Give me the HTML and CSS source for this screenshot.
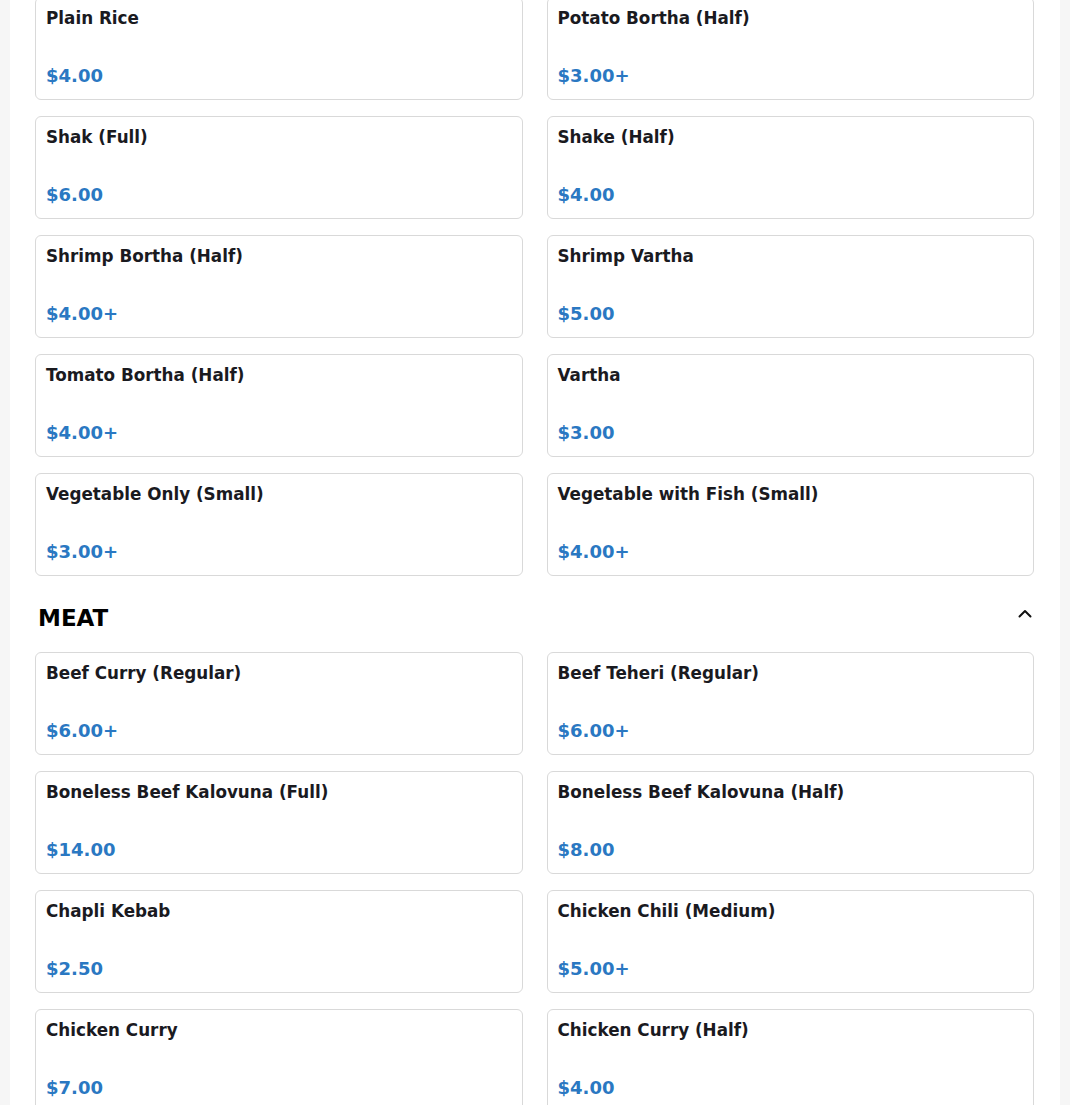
FILE: index.html
```html
<!DOCTYPE html>
<html lang="en">
<head>
<meta charset="utf-8">
<title>Menu</title>
<link rel="stylesheet" href="styles.css">
</head>
<body>
<main class="menu">
  <section class="category">
    <div class="items">
      <div class="item"><div class="item-name">Plain Rice</div><div class="item-price">$4.00</div></div>
      <div class="item"><div class="item-name">Potato Bortha (Half)</div><div class="item-price">$3.00+</div></div>
      <div class="item"><div class="item-name">Shak (Full)</div><div class="item-price">$6.00</div></div>
      <div class="item"><div class="item-name">Shake (Half)</div><div class="item-price">$4.00</div></div>
      <div class="item"><div class="item-name">Shrimp Bortha (Half)</div><div class="item-price">$4.00+</div></div>
      <div class="item"><div class="item-name">Shrimp Vartha</div><div class="item-price">$5.00</div></div>
      <div class="item"><div class="item-name">Tomato Bortha (Half)</div><div class="item-price">$4.00+</div></div>
      <div class="item"><div class="item-name">Vartha</div><div class="item-price">$3.00</div></div>
      <div class="item"><div class="item-name">Vegetable Only (Small)</div><div class="item-price">$3.00+</div></div>
      <div class="item"><div class="item-name">Vegetable with Fish (Small)</div><div class="item-price">$4.00+</div></div>
    </div>
  </section>
  <section class="category">
    <div class="category-header">
      <h2 class="category-title">MEAT</h2>
      <svg class="chevron" width="20" height="20" viewBox="0 0 20 20" aria-hidden="true"><path d="M5.5 8.5 L11 3 L16.5 8.5" fill="none" stroke="#111" stroke-width="2" stroke-linecap="round" stroke-linejoin="round"/></svg>
    </div>
    <div class="items">
      <div class="item"><div class="item-name">Beef Curry (Regular)</div><div class="item-price">$6.00+</div></div>
      <div class="item"><div class="item-name">Beef Teheri (Regular)</div><div class="item-price">$6.00+</div></div>
      <div class="item"><div class="item-name">Boneless Beef Kalovuna (Full)</div><div class="item-price">$14.00</div></div>
      <div class="item"><div class="item-name">Boneless Beef Kalovuna (Half)</div><div class="item-price">$8.00</div></div>
      <div class="item"><div class="item-name">Chapli Kebab</div><div class="item-price">$2.50</div></div>
      <div class="item"><div class="item-name">Chicken Chili (Medium)</div><div class="item-price">$5.00+</div></div>
      <div class="item"><div class="item-name">Chicken Curry</div><div class="item-price">$7.00</div></div>
      <div class="item"><div class="item-name">Chicken Curry (Half)</div><div class="item-price">$4.00</div></div>
    </div>
  </section>
</main>
</body>
</html>
```
FILE: styles.css
```css
html, body {
  margin: 0;
  padding: 0;
}
body {
  background: #f6f6f6;
  font-family: "DejaVu Sans", "Liberation Sans", sans-serif;
  overflow: hidden;
}
.menu {
  background: #ffffff;
  margin: -3px 10px 0 10px;
  padding: 0 26px 40px 25px;
}
.items {
  display: grid;
  grid-template-columns: 1fr 1fr;
  column-gap: 24px;
  row-gap: 16px;
}
.item {
  box-sizing: border-box;
  height: 103px;
  border: 1px solid #d9d9d9;
  border-radius: 6px;
  padding: 10px 10px 13px 10px;
  background: #fff;
}
.item-name {
  font-size: 16.8px;
  font-weight: bold;
  line-height: 20px;
  color: #1a1a1f;
  margin-bottom: 37px;
}
.item-price {
  font-size: 18px;
  font-weight: bold;
  line-height: 21px;
  color: #2a78c2;
}
.category-header {
  display: flex;
  justify-content: space-between;
  align-items: flex-start;
  margin: 29px 0 20px 0;
}
.category-title {
  margin: 0;
  padding-left: 3px;
  font-size: 23px;
  line-height: 27px;
  font-weight: bold;
  color: #000;
}
.chevron {
  display: block;
  flex: none;
  margin-top: 3px;
}
```
